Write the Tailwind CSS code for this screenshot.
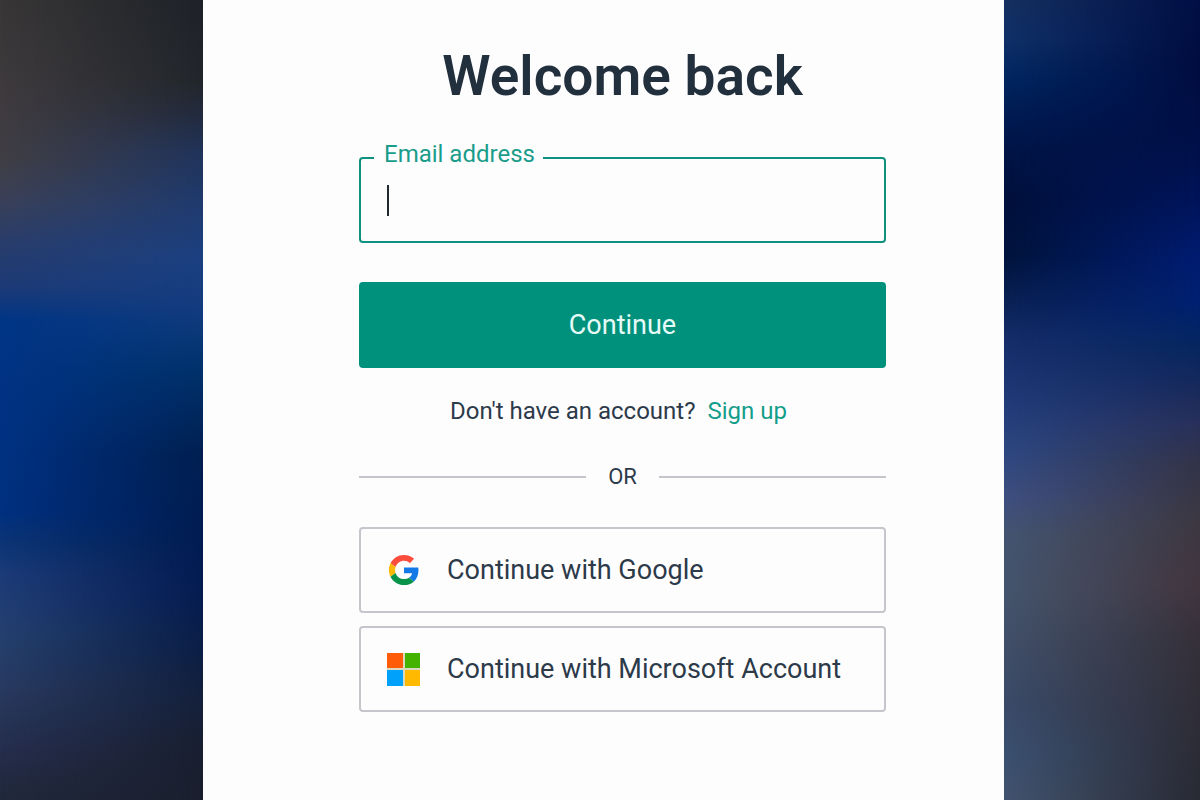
<!DOCTYPE html>
<html lang="en">
<head>
  <meta charset="utf-8">
  <meta name="viewport" content="width=device-width, initial-scale=1">
  <title>Welcome back</title>
  <script src="https://cdn.jsdelivr.net/npm/@tailwindcss/browser@4"></script>
</head>
<body class="font-['Roboto',sans-serif] text-[#2c3a49]">
  <div class="grid min-h-screen grid-cols-[203fr_801fr_196fr]">

    <!-- left backdrop: two vertical washes, the top one fades out to the right -->
    <div class="grid bg-[linear-gradient(#1e2228_0%,#22262b_10%,#222a3c_14%,#20335a_19%,#1f3b70_26%,#1c4080_32%,#143c80_38%,#0a3878_42%,#003068_47%,#00295f_51%,#001f50_57%,#001c52_66%,#061c50_75%,#0c1f44_82%,#14203c_87%,#191f30_94%,#1a1f2e_100%)]">
      <div class="mask-r-from-0% mask-r-to-100% bg-[linear-gradient(#383636_0%,#3f3b3f_13%,#403e44_20%,#3a4057_25%,#2a3d6a_30%,#1c3a76_36%,#003585_40%,#003284_50%,#003080_64%,#0c3575_68%,#1c3b78_72%,#24406f_79%,#283a60_86%,#252d4c_94%,#20283a_100%)]"></div>
    </div>

    <main class="bg-[#fefdfe] pt-[46px] pr-[118px] pb-[88px] pl-[156px]">
      <h1 class="text-center text-[55px] leading-[60px] font-semibold text-[#22303e]">Welcome back</h1>

      <form class="mt-[31px]">
        <fieldset class="rounded-[4px] border-2 border-[#10917f] px-[26px]">
          <legend class="-ml-[13px] pr-2 pb-2 pl-[10px] text-[24px] leading-[34px] text-[#1a9c8a]">
            <label for="email">Email address</label>
          </legend>
          <div class="flex h-[62px] items-start">
            <span class="mt-[6px] h-[31px] w-[2px] bg-[#23272e]"></span>
            <input id="email" type="email" name="email" autocomplete="email" class="h-[42px] min-w-0 flex-1 bg-transparent text-[27px] outline-none">
          </div>
        </fieldset>
        <button type="submit" class="mt-[39px] h-[86px] w-full rounded-[4px] bg-[#00917d] text-[27px] leading-8 text-[#e6fbf7]">Continue</button>
      </form>

      <p class="mt-[27px] pr-2 text-center text-[24px] leading-8">Don't have an account? <a href="#" class="ml-[6px] text-[#149d8b]">Sign up</a></p>

      <div class="mt-[34px] flex items-center gap-[22px] text-[22px] leading-8">
        <span class="h-[2px] flex-1 bg-[#c5c6cb]"></span>
        OR
        <span class="h-[2px] flex-1 bg-[#c5c6cb]"></span>
      </div>

      <div class="mt-[34px] grid gap-[13px]">
        <button type="button" class="flex h-[86px] items-center gap-[26px] rounded-[4px] border-2 border-[#c5c6cb] px-[26px] text-left text-[27px] leading-8">
          <svg class="h-[34px] w-[34px] shrink-0" viewBox="-3 -3 54 54" aria-hidden="true">
            <path fill="#fb4c3c" d="M24 9.5c3.54 0 6.71 1.22 9.21 3.6l6.85-6.85C35.9 2.38 30.47 0 24 0 14.62 0 6.51 5.38 2.56 13.22l7.98 6.19C12.43 13.72 17.74 9.5 24 9.5z"/>
            <path fill="#1478e6" d="M46.98 24.55c0-1.57-.15-3.09-.38-4.55H24v9.02h12.94c-.58 2.96-2.26 5.48-4.78 7.18l7.73 6c4.51-4.18 7.09-10.36 7.09-17.65z"/>
            <path fill="#fbb905" d="M10.53 28.59c-.48-1.45-.76-2.99-.76-4.59s.27-3.14.76-4.59l-7.98-6.19C.92 16.46 0 20.12 0 24c0 3.88.92 7.54 2.56 10.78l7.97-6.19z"/>
            <path fill="#07944a" d="M24 48c6.48 0 11.93-2.13 15.89-5.81l-7.73-6c-2.15 1.45-4.92 2.3-8.16 2.3-6.26 0-11.57-4.22-13.47-9.91l-7.98 6.19C6.51 42.62 14.62 48 24 48z"/>
          </svg>
          Continue with Google
        </button>
        <button type="button" class="flex h-[86px] items-center gap-[26px] rounded-[4px] border-2 border-[#c5c6cb] px-[26px] text-left text-[27px] leading-8">
          <svg class="h-[34px] w-[34px] shrink-0" viewBox="0 -1 34 34" aria-hidden="true">
            <path fill="#d9d9bd" d="M0 0h33v33H0z"/>
            <path fill="#ff5c0a" d="M0 0h16v15H0z"/>
            <path fill="#43b300" d="M18 0h15v15H18z"/>
            <path fill="#00a1fb" d="M0 17h16v16H0z"/>
            <path fill="#ffb900" d="M18 17h15v16H18z"/>
          </svg>
          Continue with Microsoft Account
        </button>
      </div>
    </main>

    <!-- right backdrop -->
    <div class="grid bg-[linear-gradient(#000f45_0%,#000d40_8%,#001048_18%,#00145a_25%,#001c70_32%,#002070_38%,#052660_43%,#16295c_48%,#28305a_53%,#333448_58%,#3c3842_65%,#42353f_73%,#35303a_80%,#302e38_88%,#282a34_100%)]">
      <div class="mask-r-from-0% mask-r-to-100% bg-[linear-gradient(#153060_0%,#0e3068_5%,#002560_10%,#001a50_15%,#001445_19%,#00103c_25%,#00133c_32%,#081f50_37%,#142c68_42%,#203a78_50%,#2c4680_56%,#3d4e80_62%,#445470_67%,#44546c_75%,#404e68_81%,#3a4a68_88%,#3a5070_94%,#42536e_100%)]"></div>
    </div>

  </div>
</body>
</html>
